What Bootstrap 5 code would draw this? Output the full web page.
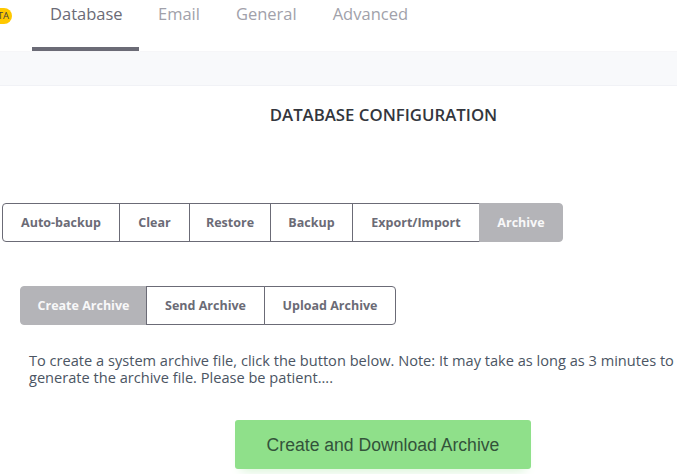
<!DOCTYPE html>
<html lang="en">
<head>
<meta charset="utf-8">
<title>Database</title>
<link href="https://cdn.jsdelivr.net/npm/bootstrap@5.3.0/dist/css/bootstrap.min.css" rel="stylesheet">
<style>
html,body{overflow:hidden;height:474px}
body{font-family:"Open Sans","Noto Sans",sans-serif;background:#fff;color:#3f3f46}
.topbar{height:51px;align-items:flex-start;overflow:hidden}
.beta-pill{width:30px;height:16px;margin:8px 0 0 -18px;border-radius:8px;background:#ffc800;color:#444;font-size:9.5px;line-height:16px;text-align:right;padding-right:3px;flex:none}
.tab-link{font-size:16.5px;line-height:22px;color:#a1a1aa;padding:3px 18px 0;height:51px;text-decoration:none}
.tab-link.on{color:#6b6b76;border-bottom:4px solid #6b6b76;margin-right:1px;width:107px}
.band{height:35px;background:#f8f9fb;border-bottom:1px solid #f1f2f6;box-shadow:inset 0 2px 2px -2px #eee}
.page-title{font-size:16.8px;font-weight:600;line-height:22px;color:#33363d;text-align:center;margin:18px 0 0 90px}
.seg-one{margin:77px 0 0 2px}
.seg-two{margin:44px 0 0 20px}
.seg-btn{font-size:12.5px;font-weight:700;color:#6b6b76;background:#fff;border:1px solid #6b6b76;height:39px;padding:2px 0 0;border-radius:0;margin-left:-1px;white-space:nowrap;text-align:center}
.seg-btn:first-child{margin-left:0;border-top-left-radius:4px;border-bottom-left-radius:4px}
.seg-btn:last-child{border-top-right-radius:4px;border-bottom-right-radius:4px}
.seg-btn.on{background:#b4b4b8;border-color:#b4b4b8;color:#f8f8f9}
.w-auto-backup{width:118px}.w-clear{width:71px}.w-restore{width:82px}.w-backup{width:83px}.w-export{width:128px}.w-archive{width:84px}
.w-create{width:127px}.w-send{width:119px}.w-upload{width:132px}
.note-text{font-size:14.6px;line-height:17px;color:#4b5563;margin:27px 0 0 29px;white-space:nowrap}
.make-btn{display:block;width:296px;height:49px;margin:34px 0 0 235px;padding:2px 0 0;background:#8fe08a;border:0;border-radius:3px;color:#33533a;font-family:"Liberation Sans",Arial,sans-serif;font-size:17.6px;box-shadow:0 8px 12px -6px #d6f3d4}
</style>
</head>
<body>
<div class="topbar d-flex">
  <span class="beta-pill">TA</span>
  <nav class="d-flex" style="margin-left:20px">
    <a class="tab-link on" href="#">Database</a>
    <a class="tab-link" href="#">Email</a>
    <a class="tab-link" href="#">General</a>
    <a class="tab-link" href="#">Advanced</a>
  </nav>
</div>
<div class="band"></div>
<h1 class="page-title">DATABASE CONFIGURATION</h1>
<div class="seg-one d-flex">
  <button class="seg-btn w-auto-backup">Auto-backup</button>
  <button class="seg-btn w-clear">Clear</button>
  <button class="seg-btn w-restore">Restore</button>
  <button class="seg-btn w-backup">Backup</button>
  <button class="seg-btn w-export">Export/Import</button>
  <button class="seg-btn w-archive on">Archive</button>
</div>
<div class="seg-two d-flex">
  <button class="seg-btn w-create on">Create Archive</button>
  <button class="seg-btn w-send">Send Archive</button>
  <button class="seg-btn w-upload">Upload Archive</button>
</div>
<p class="note-text">To create a system archive file, click the button below. Note: It may take as long as 3 minutes to<br>generate the archive file. Please be patient....</p>
<button class="make-btn">Create and Download Archive</button>
<script src="https://cdn.jsdelivr.net/npm/bootstrap@5.3.0/dist/js/bootstrap.bundle.min.js"></script>
</body>
</html>
